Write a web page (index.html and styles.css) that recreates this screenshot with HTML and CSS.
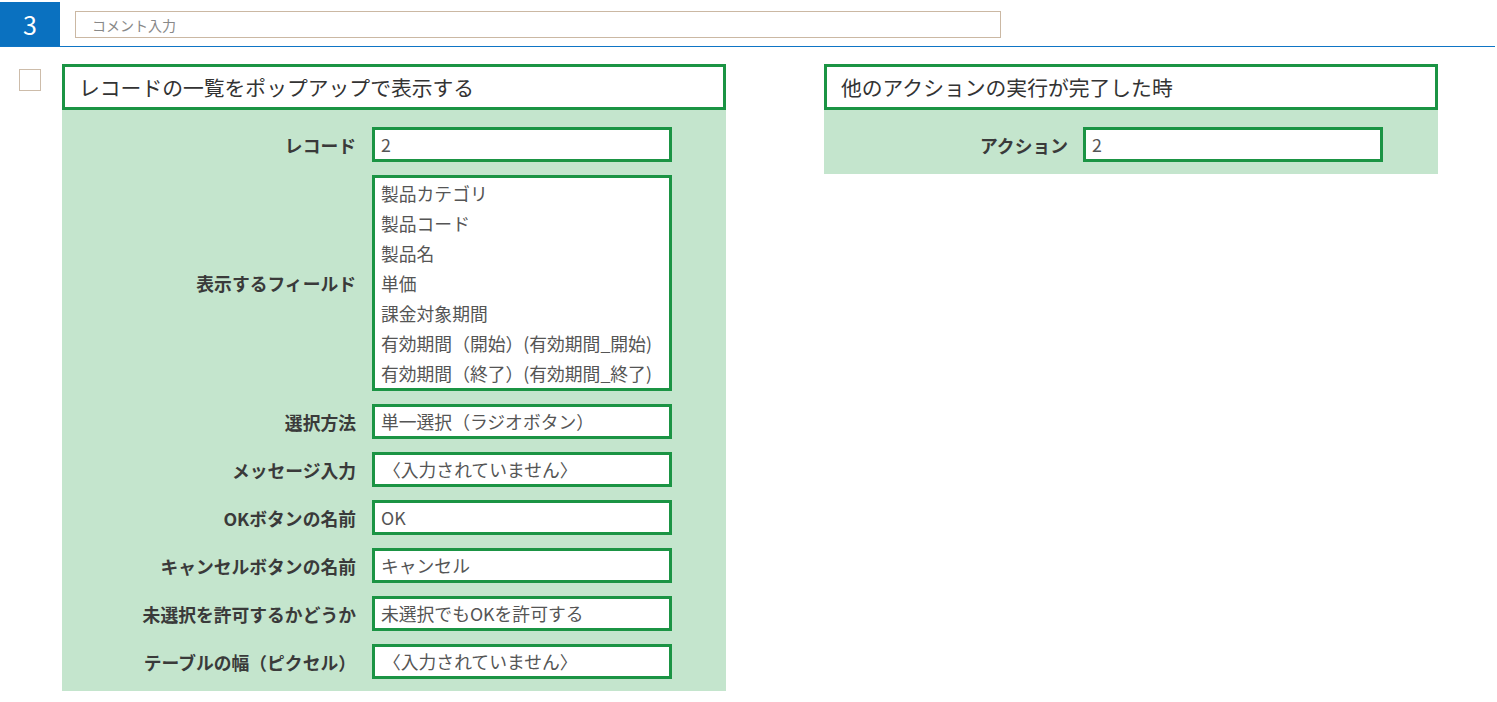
FILE: index.html
```html
<!DOCTYPE html>
<html lang="ja">
<head>
	<meta charset="utf-8"/>
	<meta name="viewport" content="width=device-width, initial-scale=1">
	<title>ステップ 3</title>
	<link rel="stylesheet" href="styles.css">
</head>
<body>
	<header class="step-head">
		<div class="step-no">3</div>
		<input class="comment" type="text" placeholder="コメント入力">
	</header>

	<div class="step-body">
		<span class="check"></span>

		<section class="panel action">
			<h2 class="panel-title">レコードの一覧をポップアップで表示する</h2>
			<div class="panel-body">
				<label class="label">レコード</label>
				<div class="value">2</div>

				<label class="label">表示するフィールド</label>
				<div class="value list">
					<div>製品カテゴリ</div>
					<div>製品コード</div>
					<div>製品名</div>
					<div>単価</div>
					<div>課金対象期間</div>
					<div>有効期間（開始）(有効期間_開始)</div>
					<div>有効期間（終了）(有効期間_終了)</div>
				</div>

				<label class="label">選択方法</label>
				<div class="value">単一選択（ラジオボタン）</div>

				<label class="label">メッセージ入力</label>
				<div class="value empty">〈入力されていません〉</div>

				<label class="label">OKボタンの名前</label>
				<div class="value">OK</div>

				<label class="label">キャンセルボタンの名前</label>
				<div class="value">キャンセル</div>

				<label class="label">未選択を許可するかどうか</label>
				<div class="value">未選択でもOKを許可する</div>

				<label class="label">テーブルの幅（ピクセル）</label>
				<div class="value empty">〈入力されていません〉</div>
			</div>
		</section>

		<section class="panel trigger">
			<h2 class="panel-title">他のアクションの実行が完了した時</h2>
			<div class="panel-body">
				<label class="label">アクション</label>
				<div class="value">2</div>
			</div>
		</section>
	</div>
</body>
</html>
```

FILE: styles.css
```css
html {
	font-family: "Noto Sans CJK JP", "Noto Sans", sans-serif;
	background: white;
	color: #333;
}

body {
	margin: 0;
}

/* step header */
.step-head {
	display: flex;
	align-items: flex-end;
	height: 46px;
	border-bottom: 1px solid #0f75c5;
	margin-right: 2px;
}

.step-no {
	width: 60px;
	height: 44px;
	background: #0a71c0;
	color: white;
	font-size: 25px;
	line-height: 44px;
	text-align: center;
}

.comment {
	align-self: flex-start;
	box-sizing: border-box;
	width: 926px;
	height: 27px;
	margin: 11px 0 0 15px;
	padding: 0 16px;
	border: 1px solid #cbb8a3;
	font-family: inherit;
	font-size: 14px;
	color: #555;
	outline: none;
}

.comment::placeholder {
	color: #888;
}

/* step body */
.step-body {
	display: flex;
	align-items: flex-start;
	padding: 17px 0 0 19px;
}

.check {
	box-sizing: border-box;
	width: 22px;
	height: 22px;
	margin-top: 5px;
	border: 1px solid #cdbcaa;
	background: white;
}

.panel {
	background: #c4e5cd;
}

.panel.action {
	width: 664px;
	margin-left: 21px;
}

.panel.trigger {
	width: 614px;
	margin-left: 98px;
}

.panel-title {
	box-sizing: border-box;
	height: 46px;
	margin: 0;
	padding: 0 14px;
	border: 3px solid #1b9444;
	background: white;
	font-size: 20.8px;
	font-weight: normal;
	line-height: 41px;
	color: #333;
}

.panel-body {
	display: grid;
	grid-template-columns: 294px 300px;
	column-gap: 16px;
	row-gap: 13px;
	align-items: center;
	padding: 17px 0 12px;
}

.trigger .panel-body {
	grid-template-columns: 244px 300px;
	column-gap: 15px;
}

.label {
	text-align: right;
	font-size: 17.8px;
	font-weight: bold;
	color: #3a3a3a;
}

.value {
	box-sizing: border-box;
	height: 35px;
	padding: 0 6px;
	border: 3px solid #1b9444;
	background: white;
	font-size: 17.8px;
	line-height: 29px;
	color: #555;
	white-space: nowrap;
	overflow: hidden;
}

.value.empty {
	padding-left: 8px;
}

.value.list {
	height: 216px;
	line-height: 30px;
}
```
